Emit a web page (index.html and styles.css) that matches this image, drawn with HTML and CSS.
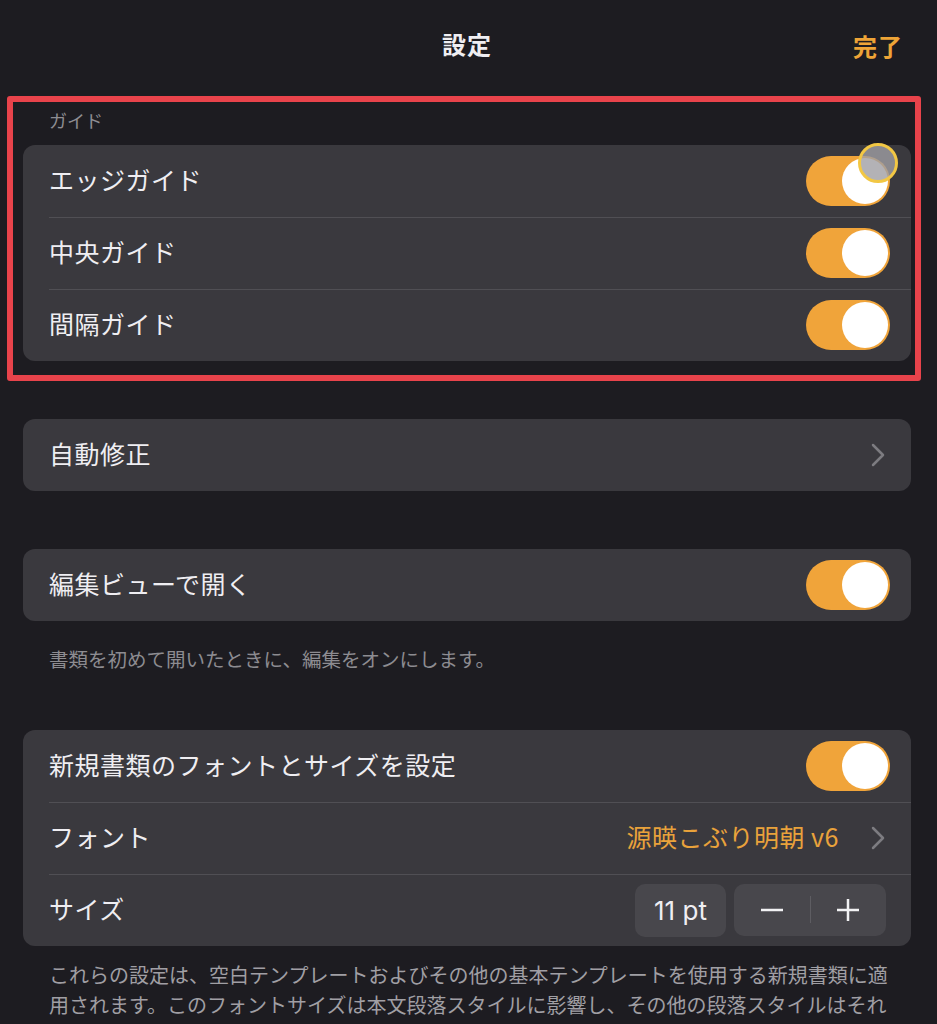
FILE: index.html
```html
<!DOCTYPE html>
<html lang="ja">
<head>
  <meta charset="utf-8">
  <link rel="stylesheet" href="styles.css">
</head>
<body>
  <div class="page">
    <div class="navbar">
      <div class="title">設定</div>
      <div class="done">完了</div>
    </div>

    <div class="section-header">ガイド</div>
    <div class="card">
      <div class="row">
        <span class="label">エッジガイド</span>
        <div class="toggle">
          <div class="knob"></div>
          <div class="touch"></div>
        </div>
      </div>
      <div class="row">
        <span class="label">中央ガイド</span>
        <div class="toggle"><div class="knob"></div></div>
      </div>
      <div class="row">
        <span class="label">間隔ガイド</span>
        <div class="toggle"><div class="knob"></div></div>
      </div>
    </div>

    <div class="card spaced">
      <div class="row">
        <span class="label">自動修正</span>
        <svg class="chevron" width="14" height="24" viewBox="0 0 14 24"><path d="M2 2 L12 12 L2 22" /></svg>
      </div>
    </div>

    <div class="card spaced">
      <div class="row">
        <span class="label">編集ビューで開く</span>
        <div class="toggle"><div class="knob"></div></div>
      </div>
    </div>
    <div class="footer">書類を初めて開いたときに、編集をオンにします。</div>

    <div class="card spaced-footer">
      <div class="row">
        <span class="label">新規書類のフォントとサイズを設定</span>
        <div class="toggle"><div class="knob"></div></div>
      </div>
      <div class="row">
        <span class="label">フォント</span>
        <div class="value-group">
          <span class="value">源暎こぶり明朝 v6</span>
          <svg class="chevron" width="14" height="24" viewBox="0 0 14 24"><path d="M2 2 L12 12 L2 22" /></svg>
        </div>
      </div>
      <div class="row size-row">
        <span class="label">サイズ</span>
        <div class="size-controls">
          <div class="size-box">11 pt</div>
          <div class="stepper">
            <div class="step">
              <svg width="24" height="24" viewBox="0 0 24 24"><path d="M1 12 H23" /></svg>
            </div>
            <div class="step-divider"></div>
            <div class="step">
              <svg width="24" height="24" viewBox="0 0 24 24"><path d="M1 12 H23 M12 1 V23" /></svg>
            </div>
          </div>
        </div>
      </div>
    </div>
    <div class="footer long">これらの設定は、空白テンプレートおよびその他の基本テンプレートを使用する新規書類に適用されます。このフォントサイズは本文段落スタイルに影響し、その他の段落スタイルはそれ</div>

    <div class="annotation"></div>
  </div>
</body>
</html>
```

FILE: styles.css
```css
body {
  margin: 0;
  background-color: #1d1c21;
  font-family: "Noto Sans CJK JP", "Noto Sans", sans-serif;
  color: #efeef2;
  height: 1024px;
  overflow: hidden;
}

.page {
  position: relative;
  padding: 0 26px 0 23px;
}

.navbar {
  height: 86px;
  display: flex;
  align-items: center;
  justify-content: center;
  position: relative;
}

.title {
  font-size: 24px;
  font-weight: bold;
  letter-spacing: 1px;
}

.done {
  position: absolute;
  right: 8px;
  top: 28px;
  font-size: 24px;
  font-weight: bold;
  color: #eea437;
  letter-spacing: 1px;
}

.section-header {
  padding: 22px 0 13px 26px;
  line-height: 24px;
  font-size: 18px;
  color: #8e8d92;
}

.card {
  background-color: #3a393e;
  border-radius: 12px;
}

.card.spaced {
  margin-top: 58px;
}

.card.spaced-footer {
  margin-top: 59px;
}

.row {
  height: 72px;
  display: flex;
  align-items: center;
  justify-content: space-between;
  padding: 0 21px 0 26px;
  position: relative;
}

.row + .row::before {
  content: "";
  position: absolute;
  top: 0;
  left: 26px;
  right: 0;
  border-top: 1px solid #504f54;
}

.label {
  font-size: 25px;
  letter-spacing: 0.5px;
  padding-bottom: 4px;
}

.toggle {
  width: 84px;
  height: 50px;
  border-radius: 25px;
  background-color: #f0a43a;
  position: relative;
}

.knob {
  position: absolute;
  right: 2px;
  top: 2px;
  width: 46px;
  height: 46px;
  border-radius: 50%;
  background-color: #fff;
}

.touch {
  position: absolute;
  left: 52px;
  top: -13px;
  width: 34px;
  height: 34px;
  border-radius: 50%;
  border: 3px solid #f2c744;
  background-color: rgba(160, 159, 164, 0.8);
}

.chevron {
  fill: none;
  stroke: #7d7c81;
  stroke-width: 2.5;
  stroke-linecap: round;
  stroke-linejoin: round;
  margin-right: 5px;
}

.value-group {
  display: flex;
  align-items: center;
  gap: 32px;
}

.value {
  font-size: 25px;
  color: #e9a23b;
  letter-spacing: 0.5px;
  padding-bottom: 4px;
}

.size-row {
  padding-right: 25px;
}

.size-controls {
  display: flex;
  gap: 8px;
}

.size-box {
  width: 91px;
  height: 53px;
  border-radius: 10px;
  background-color: #48474c;
  display: flex;
  align-items: center;
  justify-content: center;
  font-size: 26px;
  font-family: "Inter", "Noto Sans", sans-serif;
}

.stepper {
  width: 152px;
  height: 52px;
  border-radius: 10px;
  background-color: #48474c;
  display: flex;
  align-items: center;
}

.step {
  flex: 1;
  display: flex;
  justify-content: center;
}

.step svg {
  fill: none;
  stroke: #f2f2f4;
  stroke-width: 2.5;
}

.step-divider {
  width: 1px;
  height: 27px;
  background-color: #5e5d62;
}

.footer {
  padding: 26px 0 0 26px;
  line-height: 24px;
  font-size: 19.5px;
  color: #8d8c91;
}

.footer.long {
  padding: 14px 20px 0 26px;
  line-height: 30px;
  font-size: 20px;
  color: #a09fa4;
}

.annotation {
  position: absolute;
  left: 7px;
  top: 96px;
  width: 902px;
  height: 273px;
  border: 6px solid #e8434b;
  border-radius: 3px;
}
```
